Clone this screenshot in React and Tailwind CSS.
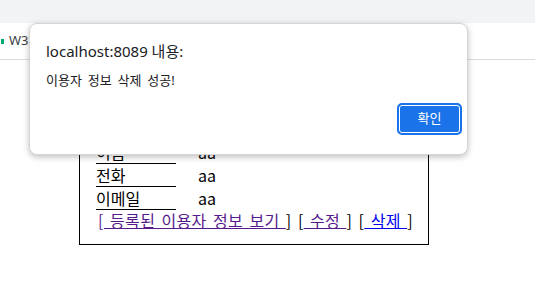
export default function App() {
  return (
    <div className="relative w-[535px] h-[301px] overflow-hidden bg-white font-['Noto_Sans','Noto_Sans_CJK_KR',sans-serif]">
      <div className="h-[23px] bg-[#f1f3f4]" />
      <div className="h-[37px] flex items-center gap-[5px] pl-[1px] border-b border-[#dadce0] text-[13px] text-[#3c4043]">
        <span className="w-[3px] h-[5px] bg-[#04aa6d]" />
        <span>W3Schools</span>
      </div>

      <div className="ml-[79px] mt-[39px] w-[350px] border border-black pl-[16px] pb-[14px] pt-[41px] text-[16px] leading-[22px] text-black font-['Noto_Sans_CJK_KR',sans-serif]">
        <table className="border-collapse">
          <tbody>
            {[
              ["이름", "aa"],
              ["전화", "aa"],
              ["이메일", "aa"],
            ].map(([label, value]) => (
              <tr key={label}>
                <td className="w-[80px] p-0 border-b border-black">{label}</td>
                <td className="pl-[22px] p-0">{value}</td>
              </tr>
            ))}
          </tbody>
        </table>
        <div className="pl-[2px] leading-[20px] whitespace-nowrap tracking-[0.3px] [word-spacing:2.5px]">
          <a href="#" className="underline text-[#551a8b]">[ 등록된 이용자 정보 보기 </a>]{" "}
          [<a href="#" className="underline text-[#551a8b]"> 수정 </a>]{" "}
          [<a href="#" className="underline text-[#0000ee]"> 삭제 </a>]
        </div>
      </div>

      <div className="absolute left-[29px] top-[23px] w-[439px] h-[132px] bg-white rounded-[8px] border border-[#d5d5d5] shadow-[0_2px_6px_rgba(0,0,0,0.25)] pl-[16px] pr-[5px] pt-[16px] text-[#202124]">
        <div className="text-[15px] leading-[22px]">localhost:8089 내용:</div>
        <div className="mt-[9px] text-[13px] leading-[18px] [word-spacing:2.5px]">이용자 정보 삭제 성공!</div>
        <div className="flex justify-end mt-[14px]">
          <button className="w-[65px] h-[32px] rounded-[5px] bg-[#1a73e8] border-2 border-[#1a73e8] flex items-center justify-center">
            <span className="w-full h-full rounded-[3px] border border-white flex items-center justify-center text-white text-[13px]">확인</span>
          </button>
        </div>
      </div>
    </div>
  );
}
